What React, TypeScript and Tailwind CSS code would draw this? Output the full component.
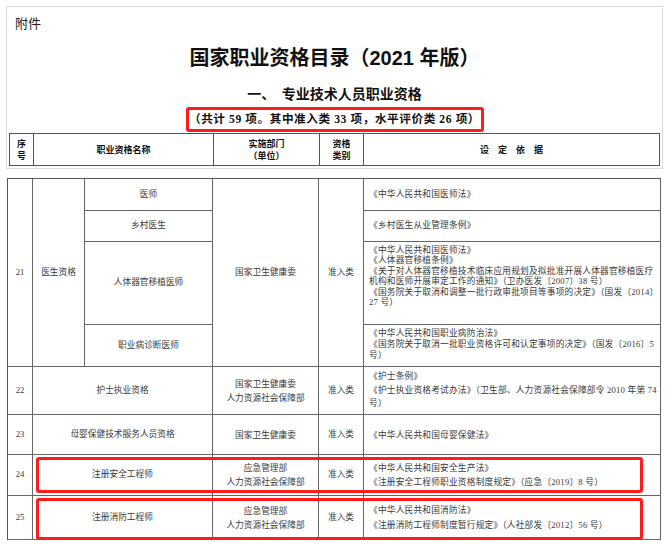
import React from "react";

const body = "font-['Liberation_Serif','Noto_Sans_CJK_SC',serif] text-[8.7px] text-[#3a3a3a]";
const cell = "border-r border-b border-[#666] flex items-center justify-center";
const basisCell = "border-r border-b border-[#666] col-start-6 pl-[5px] tracking-[0.2px]";

type Row = {
  no: string;
  name: string;
  dept: string[];
  basis: string[];
  lh: string;
};

const rows: Row[] = [
  {
    no: "22",
    name: "护士执业资格",
    dept: ["国家卫生健康委", "人力资源社会保障部"],
    basis: [
      "《护士条例》",
      "《护士执业资格考试办法》（卫生部、人力资源社会保障部令 2010 年第 74",
      "号）",
    ],
    lh: "leading-[13.5px]",
  },
  {
    no: "23",
    name: "母婴保健技术服务人员资格",
    dept: ["国家卫生健康委"],
    basis: ["《中华人民共和国母婴保健法》"],
    lh: "leading-[14px]",
  },
  {
    no: "24",
    name: "注册安全工程师",
    dept: ["应急管理部", "人力资源社会保障部"],
    basis: ["《中华人民共和国安全生产法》", "《注册安全工程师职业资格制度规定》（应急〔2019〕8 号）"],
    lh: "leading-[14px]",
  },
  {
    no: "25",
    name: "注册消防工程师",
    dept: ["应急管理部", "人力资源社会保障部"],
    basis: ["《中华人民共和国消防法》", "《注册消防工程师制度暂行规定》（人社部发〔2012〕56 号）"],
    lh: "leading-[15px]",
  },
];

const rowStart = ["row-start-5", "row-start-6", "row-start-7", "row-start-8"];

const Lines = ({ lines, className = "" }: { lines: string[]; className?: string }) => (
  <div className={className}>
    {lines.map((l, i) => (
      <div key={i} className="whitespace-nowrap">
        {l}
      </div>
    ))}
  </div>
);

export default function App() {
  return (
    <div className="relative w-[667px] h-[547px] bg-white overflow-hidden font-['Noto_Sans_CJK_SC',sans-serif] text-[#111]">
      {/* top panel */}
      <div className="ml-[6px] mt-[6px] w-[657px] h-[163px] border border-[#dcdcdc] flex flex-col">
        <div className="pl-[8px] pt-[8px] text-[13px] leading-[16px] text-[#222]">附件</div>
        <div className="mt-[15px] text-center text-[20px] leading-[24px] font-bold font-['Liberation_Sans','Noto_Sans_CJK_SC',sans-serif]">
          国家职业资格目录（2021 年版）
        </div>
        <div className="mt-[14px] text-center text-[14px] leading-[18px] font-bold whitespace-pre">
          一、  专业技术人员职业资格
        </div>
        <div className="mt-[5px] mx-auto w-[298px] h-[25px] border-[3px] border-[#ff1c1c] rounded-[3px] flex items-center justify-center text-[11.6px] tracking-[0.6px] font-bold font-['Liberation_Serif','Noto_Sans_CJK_SC',serif]">
          （共计 59 项。其中准入类 33 项，水平评价类 26 项）
        </div>
        <div className="mt-[1px] ml-[2px] w-[651px] h-[33px] grid grid-cols-[24px_180px_106px_44px_296px] border-l border-t border-[#555] text-[9px] font-bold leading-[12px]">
          <div className="border-r border-b border-[#555] flex flex-col items-center justify-center">
            <div>序</div>
            <div>号</div>
          </div>
          <div className="border-r border-b border-[#555] flex items-center justify-center">职业资格名称</div>
          <div className="border-r border-b border-[#555] flex flex-col items-center justify-center">
            <div>实施部门</div>
            <div>（单位）</div>
          </div>
          <div className="border-r border-b border-[#555] flex flex-col items-center justify-center">
            <div>资格</div>
            <div>类别</div>
          </div>
          <div className="border-r border-b border-[#555] flex items-center justify-center gap-[9px]">
            <span>设</span>
            <span>定</span>
            <span>依</span>
            <span>据</span>
          </div>
        </div>
      </div>

      {/* body table */}
      <div
        className={`ml-[7px] mt-[9px] w-[654px] grid grid-cols-[25px_52px_128px_106px_45px_297px] grid-rows-[32px_31px_83px_42px_48px_40px_41px_44px] border-l border-t border-[#555] ${body}`}
      >
        <div className={`${cell} col-start-1 row-start-1 row-span-4`}>21</div>
        <div className={`${cell} col-start-2 row-start-1 row-span-4`}>医生资格</div>
        <div className={`${cell} col-start-3 row-start-1`}>医师</div>
        <div className={`${cell} col-start-3 row-start-2`}>乡村医生</div>
        <div className={`${cell} col-start-3 row-start-3`}>人体器官移植医师</div>
        <div className={`${cell} col-start-3 row-start-4`}>职业病诊断医师</div>
        <div className={`${cell} col-start-4 row-start-1 row-span-4`}>国家卫生健康委</div>
        <div className={`${cell} col-start-5 row-start-1 row-span-4`}>准入类</div>
        <div className={`${basisCell} row-start-1 flex items-center`}>《中华人民共和国医师法》</div>
        <div className={`${basisCell} row-start-2 flex items-center`}>《乡村医生从业管理条例》</div>
        <div className={`${basisCell} row-start-3 pt-[3px]`}>
          <Lines
            className="leading-[10.4px]"
            lines={[
              "《中华人民共和国医师法》",
              "《人体器官移植条例》",
              "《关于对人体器官移植技术临床应用规划及拟批准开展人体器官移植医疗",
              "机构和医师开展审定工作的通知》（卫办医发〔2007〕38 号）",
              "《国务院关于取消和调整一批行政审批项目等事项的决定》（国发〔2014〕",
              "27 号）",
            ]}
          />
        </div>
        <div className={`${basisCell} row-start-4 pt-[3px]`}>
          <Lines
            className="leading-[11px]"
            lines={[
              "《中华人民共和国职业病防治法》",
              "《国务院关于取消一批职业资格许可和认定事项的决定》（国发〔2016〕5",
              "号）",
            ]}
          />
        </div>

        {rows.map((r, i) => (
          <React.Fragment key={r.no}>
            <div className={`${cell} col-start-1 ${rowStart[i]}`}>{r.no}</div>
            <div className={`${cell} col-start-2 col-span-2 ${rowStart[i]}`}>{r.name}</div>
            <div className={`${cell} col-start-4 ${rowStart[i]}`}>
              <Lines className="text-center leading-[14px]" lines={r.dept} />
            </div>
            <div className={`${cell} col-start-5 ${rowStart[i]}`}>准入类</div>
            <div className={`${basisCell} ${rowStart[i]} flex items-center`}>
              <Lines className={r.lh} lines={r.basis} />
            </div>
          </React.Fragment>
        ))}
      </div>

      {/* red annotation boxes */}
      <div className="absolute left-[36px] top-[457px] w-[607px] h-[36px] border-[3px] border-[#ff1c1c] rounded-[3px]" />
      <div className="absolute left-[36px] top-[498px] w-[607px] h-[42px] border-[3px] border-[#ff1c1c] rounded-[3px]" />
    </div>
  );
}
